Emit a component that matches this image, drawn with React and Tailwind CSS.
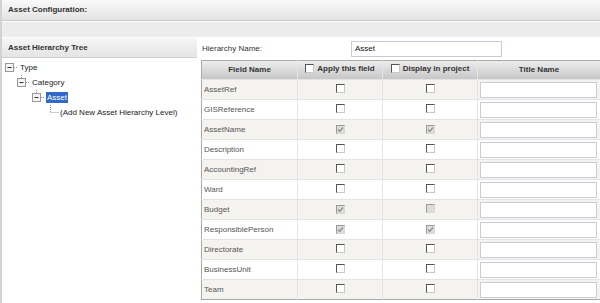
import React from 'react';

const rows = [
  { name: 'AssetRef', apply: 'off', display: 'off' },
  { name: 'GISReference', apply: 'off', display: 'off' },
  { name: 'AssetName', apply: 'lockedOn', display: 'lockedOn' },
  { name: 'Description', apply: 'off', display: 'off' },
  { name: 'AccountingRef', apply: 'off', display: 'off' },
  { name: 'Ward', apply: 'off', display: 'off' },
  { name: 'Budget', apply: 'lockedOn', display: 'lockedOff' },
  { name: 'ResponsiblePerson', apply: 'lockedOn', display: 'lockedOn' },
  { name: 'Directorate', apply: 'off', display: 'off' },
  { name: 'BusinessUnit', apply: 'off', display: 'off' },
  { name: 'Team', apply: 'off', display: 'off' },
];

function Check({ state }) {
  if (state === 'off') {
    return (
      <span className="inline-block w-[9px] h-[9px] bg-white border border-t-[#555] border-l-[#555] border-r-[#c8c8c8] border-b-[#c8c8c8]" />
    );
  }
  return (
    <span className="inline-flex items-center justify-center w-[9px] h-[9px] bg-[#dcdcdc] border border-t-[#9a9a9a] border-l-[#9a9a9a] border-r-[#d8d8d8] border-b-[#d8d8d8]">
      {state === 'lockedOn' && (
        <svg width="7" height="7" viewBox="0 0 7 7">
          <path d="M1 3.5 L2.8 5.3 L6 1.5" fill="none" stroke="#8a8a8a" strokeWidth="1.2" />
        </svg>
      )}
    </span>
  );
}

function TreeIcon({ stub }) {
  return (
    <svg width="13" height="15" viewBox="0 0 13 15" className="shrink-0">
      {stub && <line x1="4.5" y1="0" x2="4.5" y2="3" stroke="#999" strokeDasharray="1 1" />}
      <rect x="0.5" y="3.5" width="8" height="8" fill="#f4f4f4" stroke="#999" />
      <line x1="2.5" y1="7.5" x2="6.5" y2="7.5" stroke="#333" />
      <line x1="9" y1="7.5" x2="13" y2="7.5" stroke="#999" strokeDasharray="1 1" />
    </svg>
  );
}

export default function App() {
  return (
    <div className="w-[600px] h-[303px] overflow-hidden bg-white border-l-2 border-[#d2d2d2] text-[8px] text-[#333]" style={{ fontFamily: '"Liberation Sans", Arial, sans-serif' }}>
      <div className="h-[21px] flex items-center pl-[6px] font-bold bg-gradient-to-b from-[#fafafa] to-[#e3e3e3] border-b border-[#c6c6c6]">
        Asset Configuration:
      </div>
      <div className="h-[17px] bg-[#ececec] border-t border-white border-b border-[#c9c9c9]" />

      <div className="flex">
        {/* Tree panel */}
        <div className="w-[195px] shrink-0">
          <div className="h-[20px] flex items-center pl-[6px] font-bold bg-gradient-to-b from-[#f6f6f6] to-[#e4e4e4] border-b border-[#cfcfcf]">
            Asset Hierarchy Tree
          </div>
          <div className="pt-[2px] text-[#222]">
            <div className="h-[15px] flex items-center pl-[3px]">
              <TreeIcon />
              <span className="ml-[2px]">Type</span>
            </div>
            <div className="h-[15px] flex items-center pl-[15px]">
              <TreeIcon stub />
              <span className="ml-[2px]">Category</span>
            </div>
            <div className="h-[15px] flex items-center pl-[30px]">
              <TreeIcon stub />
              <span className="ml-px px-[1px] leading-[11px] bg-[#3169c6] text-white">Asset</span>
            </div>
            <div className="h-[15px] flex items-center pl-[44px]">
              <svg width="14" height="15" viewBox="0 0 14 15" className="shrink-0">
                <line x1="4.5" y1="0" x2="4.5" y2="7.5" stroke="#999" strokeDasharray="1 1" />
                <line x1="4.5" y1="7.5" x2="13" y2="7.5" stroke="#999" strokeDasharray="1 1" />
              </svg>
              <span>(Add New Asset Hierarchy Level)</span>
            </div>
          </div>
        </div>

        {/* Fields panel */}
        <div className="flex-1 pl-[4px]">
          <div className="h-[22px] flex items-center">
            <span className="w-[150px] pl-px">Hierarchy Name:</span>
            <div className="w-[151px] h-[16px] border border-[#c5ccd6] flex items-center pl-[3px] text-[#111]">Asset</div>
          </div>
          <table className="border-collapse table-fixed w-[399px] border border-[#a9a9a9]">
            <colgroup>
              <col className="w-[96px]" />
              <col className="w-[85px]" />
              <col className="w-[95px]" />
              <col className="w-[123px]" />
            </colgroup>
            <thead>
              <tr className="h-[19px] bg-gradient-to-b from-[#ededed] to-[#c5c5c5] font-bold text-[#333]">
                <th className="border-r border-[#e6e6e6] font-bold">Field Name</th>
                <th className="border-r border-[#e6e6e6] font-bold">
                  <span className="inline-flex items-center gap-[3px]"><Check state="off" />Apply this field</span>
                </th>
                <th className="border-r border-[#e6e6e6] font-bold">
                  <span className="inline-flex items-center gap-[3px]"><Check state="off" />Display in project</span>
                </th>
                <th className="font-bold">Title Name</th>
              </tr>
            </thead>
            <tbody className="text-[#555]">
              {rows.map((r, i) => (
                <tr key={r.name} className={'h-[20px] border-t border-[#e4e4e4] ' + (i % 2 === 0 ? 'bg-[#f4f3f0]' : 'bg-white')}>
                  <td className="pl-[2px] border-r border-[#e4e4e4]">{r.name}</td>
                  <td className="text-center border-r border-[#e4e4e4] leading-none"><Check state={r.apply} /></td>
                  <td className="text-center border-r border-[#e4e4e4] leading-none"><Check state={r.display} /></td>
                  <td className="pl-[2px] pr-[3px]">
                    <div className="h-[16px] bg-white border border-[#c9ced6]" />
                  </td>
                </tr>
              ))}
            </tbody>
          </table>
        </div>
      </div>
    </div>
  );
}
